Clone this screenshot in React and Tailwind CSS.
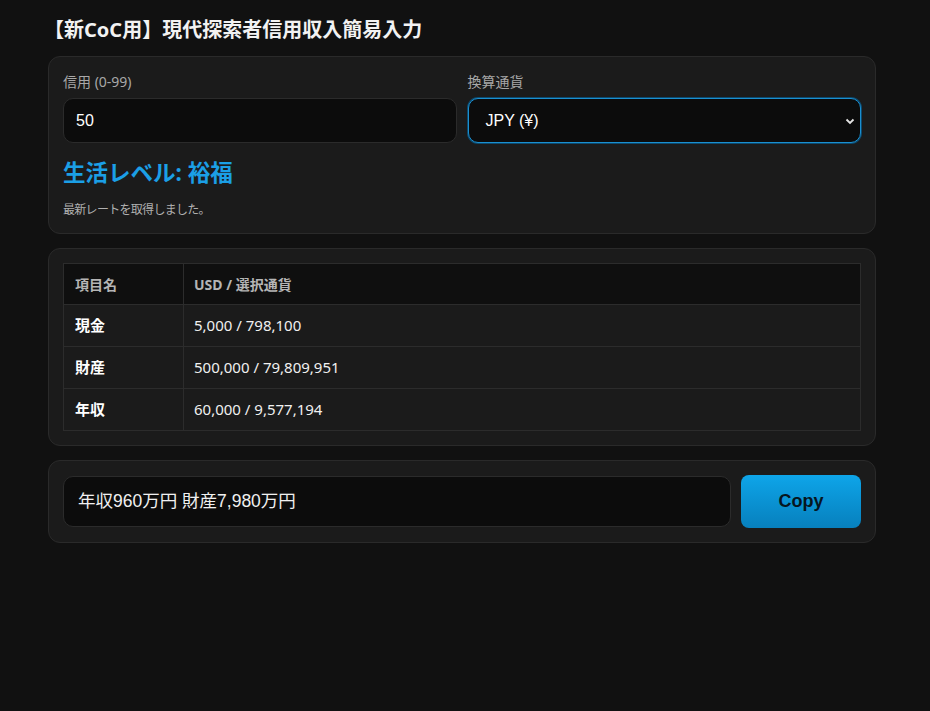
import React from "react";

export default function App() {
  const rows = [
    ["現金", "5,000 / 798,100"],
    ["財産", "500,000 / 79,809,951"],
    ["年収", "60,000 / 9,577,194"],
  ];
  return (
    <div className="min-h-[711px] bg-[#111111] text-[#e5e5e5] font-['Noto_Sans','Noto_Sans_CJK_JP',sans-serif]">
      <div className="ml-[48px] w-[828px] pt-[15px]">
        <h1 className="text-[20px] font-bold leading-[30px] text-[#f2f2f2] ml-[-4px]">【新CoC用】現代探索者信用収入簡易入力</h1>

        <div className="mt-[11px] rounded-xl border border-[#2a2a2a] bg-[#1b1b1b] px-[14px] pt-[14px] pb-[14px]">
          <div className="grid grid-cols-2 gap-[11px]">
            <div>
              <div className="text-[14px] leading-[22px] text-[#a8a8a8]">信用 (0-99)</div>
              <div className="mt-[5px] h-[45px] rounded-[10px] border border-[#2b2b2b] bg-[#0c0c0c] flex items-center px-[12px] text-[16px] text-white font-['Liberation_Sans',sans-serif]">50</div>
            </div>
            <div>
              <div className="text-[14px] leading-[22px] text-[#a8a8a8]">換算通貨</div>
              <div className="mt-[5px] h-[45px] rounded-[10px] border border-[#1b8fd0] ring-1 ring-[#0c4a6e] bg-[#0c0c0c] flex items-center justify-between pl-[17px] pr-[5px] text-[16px] text-white font-['Liberation_Sans',sans-serif]">
                <span>JPY (¥)</span>
                <svg width="10" height="10" viewBox="0 0 10 10"><path d="M1.5 3.5 L5 7 L8.5 3.5" fill="none" stroke="#e5e5e5" strokeWidth="1.8" /></svg>
              </div>
            </div>
          </div>
          <div className="mt-[14px] text-[22.5px] font-bold leading-[32px] text-[#1b9fe6]">生活レベル: 裕福</div>
          <div className="mt-[12px] text-[12px] leading-[18px] tracking-[-0.7px] text-[#b0b0b0]">最新レートを取得しました。</div>
        </div>

        <div className="mt-[14px] rounded-xl border border-[#2a2a2a] bg-[#1b1b1b] p-[14px]">
          <table className="w-full border-collapse text-[15px]">
            <thead>
              <tr className="bg-[#0f0f0f]">
                <th className="w-[120px] h-[41px] border border-[#2c2c2c] text-left px-[11px] text-[14px] font-bold text-[#b5b5b5]">項目名</th>
                <th className="h-[41px] border border-[#2c2c2c] text-left px-[10px] text-[14px] font-bold text-[#b5b5b5]">USD / 選択通貨</th>
              </tr>
            </thead>
            <tbody>
              {rows.map(([k, v]) => (
                <tr key={k}>
                  <td className="h-[42px] border border-[#2c2c2c] px-[11px] font-bold text-white">{k}</td>
                  <td className="h-[42px] border border-[#2c2c2c] px-[10px] text-[#f0f0f0]">{v}</td>
                </tr>
              ))}
            </tbody>
          </table>
        </div>

        <div className="mt-[14px] rounded-xl border border-[#2a2a2a] bg-[#1b1b1b] px-[14px] py-[14px] flex items-center gap-[10px]">
          <div className="flex-1 h-[51px] rounded-[10px] border border-[#2b2b2b] bg-[#0c0c0c] flex items-center px-[14px] text-[17.5px] text-[#f0f0f0] font-['Liberation_Sans','Noto_Sans_CJK_JP',sans-serif]">年収960万円 財産7,980万円</div>
          <button className="w-[120px] h-[53px] rounded-[8px] bg-gradient-to-b from-[#0ea5e9] to-[#0780bd] text-[18px] font-bold text-[#06151f] font-['Liberation_Sans',sans-serif]">Copy</button>
        </div>
      </div>
    </div>
  );
}
